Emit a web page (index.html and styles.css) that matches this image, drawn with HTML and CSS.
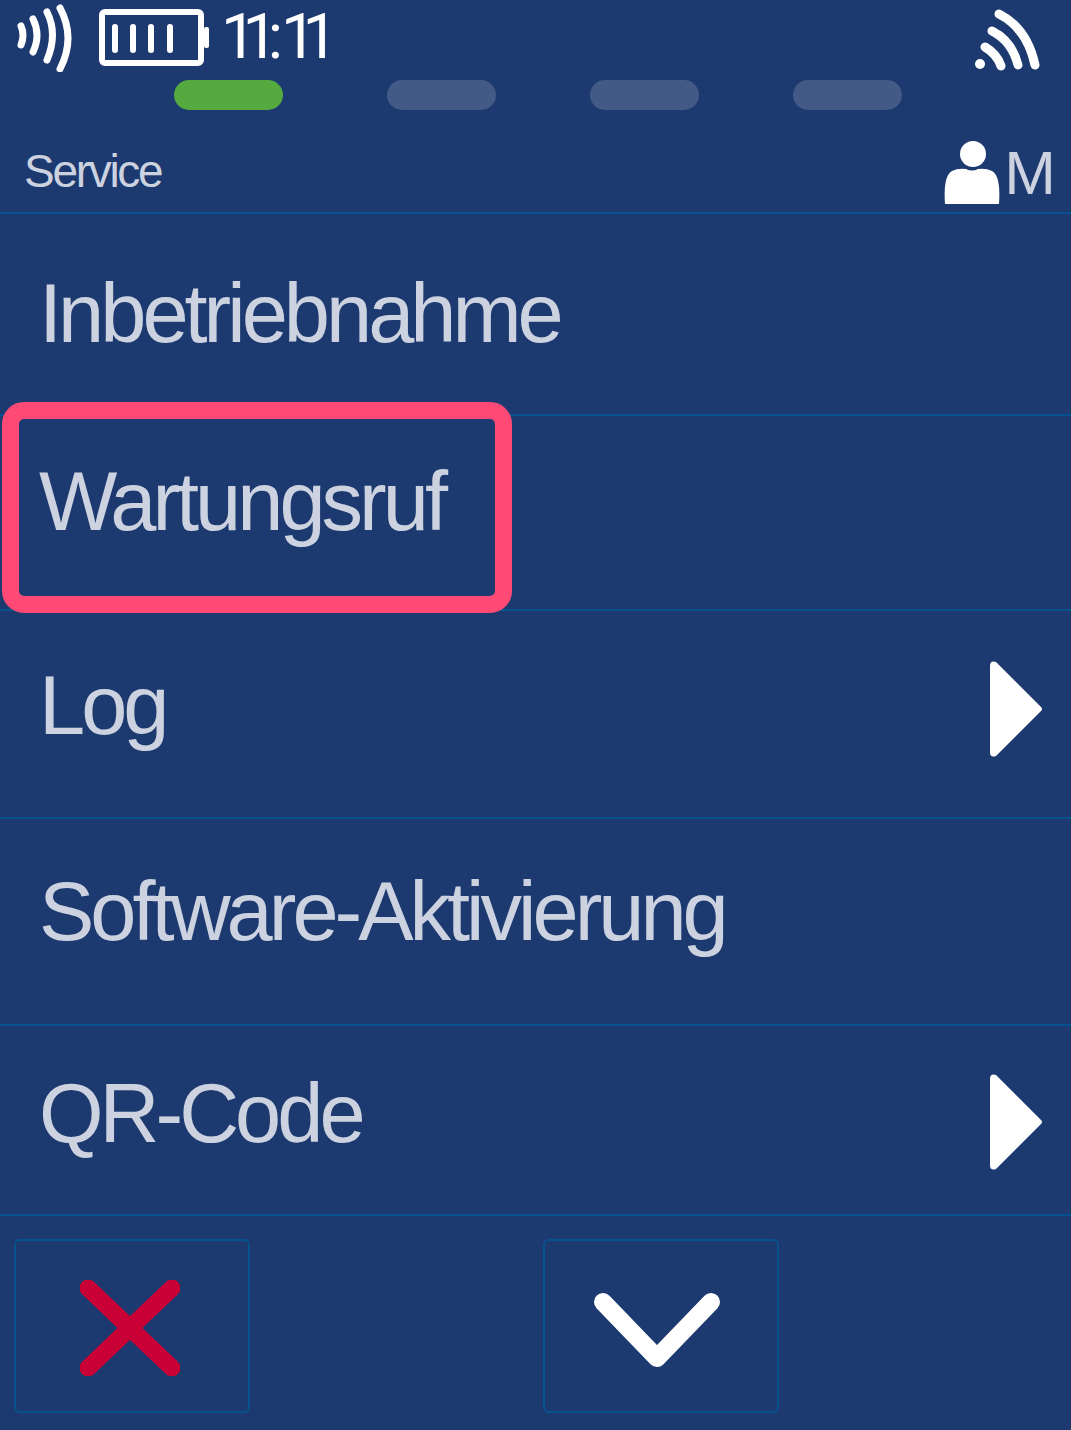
FILE: index.html
```html
<!DOCTYPE html>
<html lang="de">

<head>
    <meta charset="UTF-8">
    <title>Service</title>
    <link rel="stylesheet" href="styles.css">
</head>

<body>
    <div class="screen">
        <div class="status-bar">
            <svg class="icon-nfc" width="56" height="68" viewBox="0 0 56 68">
                <path d="M4 22q4 9 0 19M16 15q8 16 0 33M30 8q11 22 0 48M43 4q16 30 0 61" />
            </svg>
            <svg class="icon-battery" width="111" height="58" viewBox="0 0 111 58">
                <rect x="3" y="3" width="99" height="51" rx="3" class="battery-case" />
                <rect x="105" y="18" width="5" height="21" rx="2" class="battery-fill" />
                <rect x="13" y="15" width="6" height="29" rx="3" class="battery-fill" />
                <rect x="31" y="15" width="6" height="29" rx="3" class="battery-fill" />
                <rect x="49" y="15" width="6" height="29" rx="3" class="battery-fill" />
                <rect x="68" y="15" width="6" height="29" rx="3" class="battery-fill" />
            </svg>
            <div class="clock">11<span class="clock-colon">:</span>11</div>
            <svg class="icon-signal" width="68" height="64" viewBox="0 0 68 64">
                <circle cx="8" cy="55" r="5" />
                <path d="M13 38q12 7 16 19M20 22q20 10 26 34M27 5q28 14 36 51" />
            </svg>
        </div>
        <div class="steps">
            <div class="step step-active"></div>
            <div class="step"></div>
            <div class="step"></div>
            <div class="step"></div>
        </div>
        <div class="title-bar">
            <div class="title">Service</div>
            <svg class="icon-user" width="56" height="65" viewBox="0 0 56 65">
                <circle cx="29" cy="14" r="13" />
                <path d="M1 64q-2-28 7-33q6-3 14-2q6 3 12 0q8-1 14 2q9 5 7 33z" />
            </svg>
            <div class="user-level">M</div>
        </div>
        <div class="menu">
            <div class="menu-row"><span class="menu-label">Inbetriebnahme</span></div>
            <div class="menu-row">
                <span class="menu-label">Wartungsruf</span>
                <div class="highlight"></div>
            </div>
            <div class="menu-row">
                <span class="menu-label">Log</span>
                <svg class="icon-arrow" width="54" height="98" viewBox="0 0 54 98">
                    <path d="M1 6q0-6 6-4l45 45q2 2 0 4l-45 45q-6 2-6-4z" />
                </svg>
            </div>
            <div class="menu-row"><span class="menu-label">Software-Aktivierung</span></div>
            <div class="menu-row">
                <span class="menu-label">QR-Code</span>
                <svg class="icon-arrow" width="54" height="98" viewBox="0 0 54 98">
                    <path d="M1 6q0-6 6-4l45 45q2 2 0 4l-45 45q-6 2-6-4z" />
                </svg>
            </div>
        </div>
        <div class="footer">
            <button class="soft-key soft-key-cancel">
                <svg width="100" height="96" viewBox="0 0 100 96">
                    <path class="mark-cancel" d="M8 8l84 80M92 8l-84 80" />
                </svg>
            </button>
            <button class="soft-key soft-key-down">
                <svg width="126" height="76" viewBox="0 0 126 76">
                    <path class="mark-down" d="M9 10l54 56l54-56" />
                </svg>
            </button>
        </div>
    </div>
</body>

</html>
```

FILE: styles.css
```css
body {
    margin: 0;
    background-color: #1d3a70;
    font-family: "Liberation Sans", Arial, sans-serif;
}

.screen {
    width: 1071px;
    height: 1430px;
    overflow: hidden;
}

.status-bar {
    display: flex;
    align-items: flex-start;
    height: 80px;
    padding: 4px 31px 0 17px;
    box-sizing: border-box;
}

.icon-nfc {
    flex: none;
}

.icon-nfc path {
    fill: none;
    stroke: #fff;
    stroke-width: 7;
    stroke-linecap: round;
}

.icon-battery {
    flex: none;
    margin: 5px 0 0 26px;
}

.battery-case {
    fill: none;
    stroke: #fff;
    stroke-width: 6;
}

.battery-fill {
    fill: #fff;
}

.clock {
    margin-left: 11px;
    font-family: Roboto, sans-serif;
    font-size: 63px;
    line-height: 66px;
    letter-spacing: -14px;
    color: #fff;
}

.clock-colon {
    margin-left: 4px;
    letter-spacing: -2px;
}

.icon-signal {
    flex: none;
    margin: 5px 0 0 auto;
}

.icon-signal circle {
    fill: #fff;
}

.icon-signal path {
    fill: none;
    stroke: #fff;
    stroke-width: 9;
    stroke-linecap: round;
}

.steps {
    display: flex;
    gap: 94px;
    height: 30px;
    padding-left: 174px;
}

.step {
    width: 109px;
    border-radius: 15px;
    background-color: #435a86;
}

.step-active {
    margin-right: 10px;
    background-color: #55aa3f;
}

.title-bar {
    display: flex;
    align-items: flex-start;
    height: 104px;
    padding: 30px 17px 0 24px;
    border-bottom: 2px solid #06528f;
    box-sizing: border-box;
    color: #ccd2df;
}

.title {
    flex: 1;
    font-size: 46px;
    line-height: 62px;
    letter-spacing: -2.3px;
}

.icon-user {
    fill: #fff;
}

.user-level {
    margin-left: 4px;
    font-size: 62px;
    line-height: 66px;
    letter-spacing: -2px;
}

.menu {
    display: grid;
    grid-template-rows: 202px 195px 208px 207px 190px;
}

.menu-row {
    position: relative;
    display: flex;
    align-items: center;
    justify-content: space-between;
    padding: 0 28px 0 39px;
    border-bottom: 2px solid #06528f;
    box-sizing: border-box;
    color: #ccd2df;
}

.menu-label {
    font-size: 83px;
    line-height: 96px;
    letter-spacing: -4px;
}

.menu-row:nth-child(2) .menu-label {
    margin-bottom: 22px;
}

.menu-row:nth-child(3) .menu-label {
    margin-bottom: 16px;
}

.menu-row:nth-child(3) .icon-arrow {
    margin-bottom: 10px;
}

.menu-row:nth-child(4) .menu-label {
    margin-bottom: 20px;
}

.menu-row:nth-child(5) .menu-label {
    margin-bottom: 12px;
}

.menu-row:nth-child(5) .icon-arrow {
    margin-top: 4px;
}

.icon-arrow {
    flex: none;
    fill: #fff;
}

.highlight {
    position: absolute;
    left: 2px;
    top: -14px;
    width: 510px;
    height: 211px;
    border: 17px solid #ff4a75;
    border-radius: 22px;
    box-sizing: border-box;
}

.footer {
    display: flex;
    gap: 293px;
    padding: 23px 14px 0;
}

.soft-key {
    display: flex;
    align-items: center;
    justify-content: center;
    width: 236px;
    height: 174px;
    padding: 0;
    border: 2px solid #06528f;
    border-radius: 6px;
    background: none;
}

.soft-key-cancel {
    padding: 3px 5px 0 0;
}

.soft-key-down {
    padding: 7px 9px 0 0;
}

.mark-cancel {
    fill: none;
    stroke: #c90035;
    stroke-width: 17;
    stroke-linecap: round;
}

.mark-down {
    fill: none;
    stroke: #fff;
    stroke-width: 18;
    stroke-linecap: round;
    stroke-linejoin: round;
}
```
